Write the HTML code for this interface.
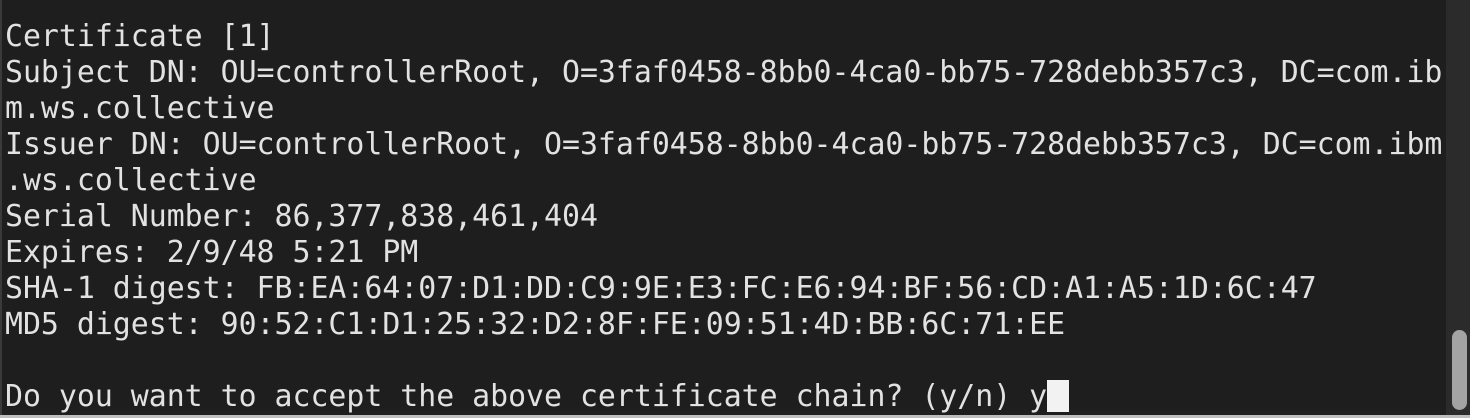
<!DOCTYPE html>
<html><head><style>
html,body{margin:0;padding:0;background:#1e1e1e;width:1470px;height:418px;overflow:hidden;position:relative}
pre{position:absolute;left:5px;top:19px;margin:0;font-family:"DejaVu Sans Mono",monospace;font-size:29.85px;line-height:36px;color:#e2e2e2}
.sb{position:absolute;left:1446px;top:0;width:24px;height:415px;background:#2b2b2b}
.th{position:absolute;left:1452px;top:330px;width:15px;height:80px;background:#a3a3a3;border-radius:8px}
.bt{position:absolute;left:0;top:415px;width:1470px;height:3px;background:#bdbdbd}
.lf{position:absolute;left:0;top:0;width:2px;height:415px;background:#3a3a3a}
.cur{display:inline-block;width:22px;height:32px;background:#f2f2f2;vertical-align:-6px}
</style></head><body>
<div class="lf"></div>
<pre>Certificate [1]
Subject DN: OU=controllerRoot, O=3faf0458-8bb0-4ca0-bb75-728debb357c3, DC=com.ib
m.ws.collective
Issuer DN: OU=controllerRoot, O=3faf0458-8bb0-4ca0-bb75-728debb357c3, DC=com.ibm
.ws.collective
Serial Number: 86,377,838,461,404
Expires: 2/9/48 5:21 PM
SHA-1 digest: FB:EA:64:07:D1:DD:C9:9E:E3:FC:E6:94:BF:56:CD:A1:A5:1D:6C:47
MD5 digest: 90:52:C1:D1:25:32:D2:8F:FE:09:51:4D:BB:6C:71:EE

Do you want to accept the above certificate chain? (y/n) y<span class="cur"></span></pre>
<div class="sb"></div><div class="th"></div><div class="bt"></div>
</body></html>
